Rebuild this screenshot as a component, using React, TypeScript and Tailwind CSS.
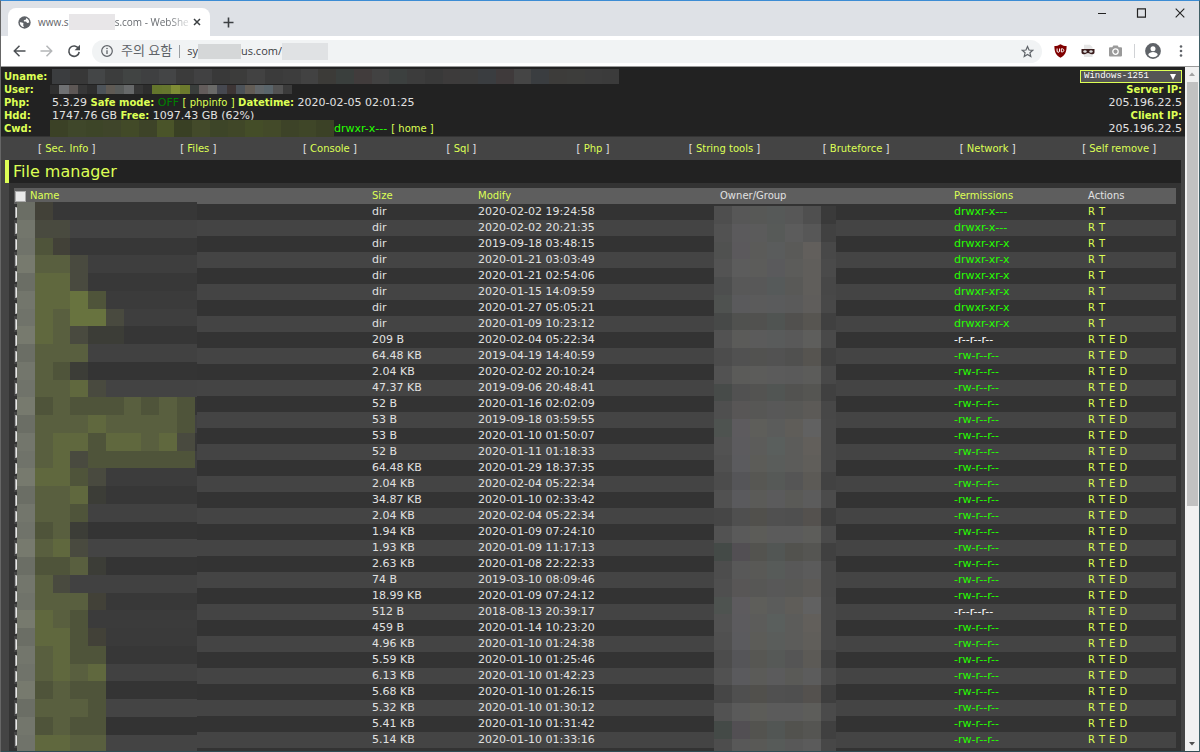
import React from 'react';

const CELL = 17.75;

type MosaicProps = {
  rows: string[][];
  cellWidth: number;
  cellHeight: number;
  width: number;
  height: number;
  className?: string;
};

/** Pixelated block that hides a private value. */
function Mosaic({ rows, cellWidth, cellHeight, width, height, className }: MosaicProps) {
  return (
    <svg
      className={className}
      width={width}
      height={height}
      viewBox={`0 0 ${width} ${height}`}
      shapeRendering="crispEdges"
      aria-hidden="true"
    >
      {rows.map((row, y) =>
        row.map((fill, x) => (
          <rect
            key={`${x}-${y}`}
            x={x * cellWidth}
            y={y * cellHeight}
            width={cellWidth + 0.3}
            height={cellHeight + 0.3}
            fill={fill}
          />
        )),
      )}
    </svg>
  );
}

const shades: Record<string, string> = {
  z: '#3c3d37',
  y: '#424138',
  a: '#494a3f',
  b: '#4f543a',
  c: '#595f3f',
  d: '#60683e',
  e: '#68733f',
};

// Each entry: background of the row, then the tint of each cell from the left.
const nameRows: [string, string][] = [
  ['#373737', 'y'],
  ['#424242', 'aa'],
  ['#373737', 'by'],
  ['#3e3e3e', 'cca'],
  ['#383838', 'dda'],
  ['#3b3b3b', 'ddeb'],
  ['#3e3e3e', 'dceea'],
  ['#363636', 'dcazz'],
  ['#414141', 'ccc'],
  ['#343434', 'cbz'],
  ['#434343', 'ccda'],
  ['#353535', 'bcbbbcbcb'],
  ['#414141', 'cccdccccb'],
  ['#363636', 'cddbddcda'],
  ['#3e3e3e', 'cdabbbbbb'],
  ['#3c3c3c', 'ddba'],
  ['#373737', 'ccdz'],
  ['#414141', 'ccb'],
  ['#343434', 'bcz'],
  ['#444444', 'cda'],
  ['#343434', 'bbcz'],
  ['#414141', 'ca'],
  ['#383838', 'cccy'],
  ['#3b3b3b', 'dcb'],
  ['#3a3a3a', 'ddby'],
  ['#373737', 'cdbb'],
  ['#414141', 'cdcd'],
  ['#343434', 'bcbb'],
  ['#444444', 'cccb'],
  ['#333333', 'bcbb'],
  ['#444444', 'ddcc'],
];

const edgeShades = ['#6b6e65', '#73766c', '#70736a', '#777a6e'];

const nameMosaic = nameRows.map(([base, tint], i) => {
  const cells = [edgeShades[i % 4]];
  for (let x = 0; x < 10; x++) cells.push(x < tint.length ? shades[tint[x]] : base);
  return cells;
});

const ownerPatterns = [
  ['#4e4e4e', '#575757', '#575856', '#565958', '#575757', '#4f4f4f', '#3a3a3a'],
  ['#525252', '#5b5a5c', '#5b5b5b', '#575a58', '#5c5c5c', '#575757', '#414141'],
  ['#505150', '#5b595c', '#5b5b59', '#5a5c5c', '#5a5a58', '#625f5c', '#484848'],
  ['#535353', '#5c5c5c', '#5c5c5a', '#5a5a5c', '#5c5c5a', '#605e5b', '#4a4a4a'],
  ['#4d4e4e', '#585858', '#585858', '#565a5a', '#595957', '#605e5b', '#474747'],
  ['#4f5250', '#5a5a5c', '#5b5b5b', '#5a5b5c', '#5a5a5a', '#5f5d5b', '#484848'],
  ['#474948', '#50514f', '#51514f', '#505452', '#51504e', '#575551', '#404040'],
  ['#525252', '#5b5b59', '#5b5b5b', '#595b5b', '#595959', '#5e5e5c', '#494949'],
  ['#4c4c4c', '#515151', '#525250', '#525252', '#50504f', '#565450', '#404040'],
  ['#525252', '#5b5b59', '#5c5c5a', '#5b5b5b', '#5a5a5a', '#5c5c5a', '#484848'],
  ['#474b49', '#515151', '#535351', '#515553', '#525250', '#555552', '#404040'],
  ['#4f4f4f', '#585656', '#575755', '#585858', '#585856', '#5c5a57', '#474747'],
  ['#4e5350', '#5d5b5e', '#5e5e5a', '#5b5c5b', '#5f5d59', '#616161', '#484848'],
  ['#525252', '#5c5b5e', '#5c5c5a', '#5a5f5d', '#5c5c5a', '#625f5b', '#484848'],
  ['#505050', '#5b5b5e', '#5c5c58', '#5a5d5b', '#5c5c5a', '#605e5a', '#484848'],
  ['#4c4c4c', '#555558', '#575753', '#565957', '#555555', '#5c5a56', '#424242'],
  ['#515151', '#5a5a5d', '#5b5b58', '#5b5b5c', '#5a5a57', '#5c5c5c', '#4b4b4b'],
  ['#464646', '#4f4f4f', '#51504c', '#505050', '#4f4f4f', '#54514e', '#3e3e3e'],
  ['#525252', '#5a5a5a', '#5c5c58', '#5b5b5b', '#5b5b5b', '#5d5d5a', '#4a4a4a'],
  ['#444a47', '#524f53', '#53534f', '#525654', '#52524e', '#555552', '#404040'],
  ['#4d4d4d', '#585858', '#595956', '#575b59', '#585858', '#5b5b5b', '#474747'],
];

const ownerMosaic = Array.from({ length: 31 }, (_, i) => ownerPatterns[i < 21 ? i : i - 10]);

const unameMosaic = [
  [
    '#3b3d3f', '#383838', '#444647', '#3c3d3d', '#414443', '#3f4041', '#444546', '#3b3b3b',
    '#414142', '#393939', '#3c3c3b', '#424242', '#3b3b3b', '#3d3d3d', '#424242', '#3c3b38',
    '#3a3f3d', '#413c3c', '#424242', '#3c403f', '#3c3c3c', '#393939', '#3d3b3b', '#3c3c3c',
    '#3a3d40', '#3f3a3b', '#454545', '#3a3d40', '#3d3c3a', '#3d3d3b', '#3c3c3c', '#3b3b3b',
  ],
];

const userMosaic = [
  [
    '#303030', '#6f7173', '#5d5755', '#373737', '#2e2e2e', '#4d5359', '#5f5a54', '#585b5a',
    '#67696a', '#363636', '#2d2d2d', '#64752c', '#66762e', '#7f8c35', '#6c7a2d', '#3a3e3c',
    '#635c5b', '#6a6a68', '#464850', '#3d3535', '#4c5258', '#625c55', '#616669', '#5a656b',
    '#535353', '#3b3b3b',
  ],
];

const cwdMosaic = [
  [
    '#3b4126', '#3f472a', '#3d4528', '#3f452a', '#424a28', '#3d4328', '#4a5429', '#394024',
    '#434a2a', '#3d4528', '#404728', '#444d28', '#434a29', '#3d4328', '#3f4628', '#3b4126',
  ],
];

type FileRow = { size: string; date: string; perm: string };

const rows: FileRow[] = [
  ['dir', '2020-02-02 19:24:58', 'drwxr-x---'],
  ['dir', '2020-02-02 20:21:35', 'drwxr-x---'],
  ['dir', '2019-09-18 03:48:15', 'drwxr-xr-x'],
  ['dir', '2020-01-21 03:03:49', 'drwxr-xr-x'],
  ['dir', '2020-01-21 02:54:06', 'drwxr-xr-x'],
  ['dir', '2020-01-15 14:09:59', 'drwxr-xr-x'],
  ['dir', '2020-01-27 05:05:21', 'drwxr-xr-x'],
  ['dir', '2020-01-09 10:23:12', 'drwxr-xr-x'],
  ['209 B', '2020-02-04 05:22:34', '-r--r--r--'],
  ['64.48 KB', '2019-04-19 14:40:59', '-rw-r--r--'],
  ['2.04 KB', '2020-02-02 20:10:24', '-rw-r--r--'],
  ['47.37 KB', '2019-09-06 20:48:41', '-rw-r--r--'],
  ['52 B', '2020-01-16 02:02:09', '-rw-r--r--'],
  ['53 B', '2019-09-18 03:59:55', '-rw-r--r--'],
  ['53 B', '2020-01-10 01:50:07', '-rw-r--r--'],
  ['52 B', '2020-01-11 01:18:33', '-rw-r--r--'],
  ['64.48 KB', '2020-01-29 18:37:35', '-rw-r--r--'],
  ['2.04 KB', '2020-02-04 05:22:34', '-rw-r--r--'],
  ['34.87 KB', '2020-01-10 02:33:42', '-rw-r--r--'],
  ['2.04 KB', '2020-02-04 05:22:34', '-rw-r--r--'],
  ['1.94 KB', '2020-01-09 07:24:10', '-rw-r--r--'],
  ['1.93 KB', '2020-01-09 11:17:13', '-rw-r--r--'],
  ['2.63 KB', '2020-01-08 22:22:33', '-rw-r--r--'],
  ['74 B', '2019-03-10 08:09:46', '-rw-r--r--'],
  ['18.99 KB', '2020-01-09 07:24:12', '-rw-r--r--'],
  ['512 B', '2018-08-13 20:39:17', '-r--r--r--'],
  ['459 B', '2020-01-14 10:23:20', '-rw-r--r--'],
  ['4.96 KB', '2020-01-10 01:24:38', '-rw-r--r--'],
  ['5.59 KB', '2020-01-10 01:25:46', '-rw-r--r--'],
  ['6.13 KB', '2020-01-10 01:42:23', '-rw-r--r--'],
  ['5.68 KB', '2020-01-10 01:26:15', '-rw-r--r--'],
  ['5.32 KB', '2020-01-10 01:30:12', '-rw-r--r--'],
  ['5.41 KB', '2020-01-10 01:31:42', '-rw-r--r--'],
  ['5.14 KB', '2020-01-10 01:33:16', '-rw-r--r--'],
].map(([size, date, perm]) => ({ size, date, perm }));

const menu = ['Sec. Info', 'Files', 'Console', 'Sql', 'Php', 'String tools', 'Bruteforce', 'Network', 'Self remove'];

function TabStrip() {
  return (
    <div className="flex h-[35px] shrink-0 items-end bg-[#dee1e6] pl-[7px]">
      <div className="flex h-7 w-[202px] items-center rounded-t-lg bg-white pl-[10px] pr-[9px] text-[10px] text-[#5f6368]">
        <svg width="13" height="13" viewBox="0 0 16 16" className="mr-[7px] shrink-0" aria-hidden="true">
          <circle cx="8" cy="8" r="7.6" fill="#5f6368" />
          <path
            d="M2.2 7.6c1.500.2 3.700.2 4.400 1.300.6 1-.5 1.500-.2 2.500.2.800.9.900.8 2.200-3-.2-5.200-2.900-5-6zM10 2.600c-.2.900.2 1.400-.7 1.900-1 .5-2 .2-2.200 1.300-.1.900 1.200.9 2.200 1 1.400.1 1.200 1.600 2.300 1.800.9.200 1.200-.6 2.200-.5.100-2.500-1.500-4.700-3.800-5.500z"
            fill="#fff"
          />
        </svg>
        <span className="flex min-w-0 flex-1 items-center whitespace-nowrap">
          www.s
          <span className="h-4 w-[46px] shrink-0 bg-[#e8e6e8]" />
          <span className="bg-linear-to-r from-[#5f6368] from-70% to-[#e4e5e6] bg-clip-text text-transparent">
            s.com - WebShe
          </span>
        </span>
        <button type="button" aria-label="Close tab" className="flex size-[9px] shrink-0 items-center justify-center">
          <svg width="8" height="8" viewBox="0 0 8 8" aria-hidden="true">
            <path d="M1 1l6 6M7 1l-6 6" stroke="#3c4043" strokeWidth="1.5" />
          </svg>
        </button>
      </div>
      <button type="button" aria-label="New tab" className="ml-[13px] flex h-7 items-center">
        <svg width="11" height="11" viewBox="0 0 11 11" aria-hidden="true">
          <path d="M5.500.5v10M.5 5.500h10" stroke="#3c4043" strokeWidth="1.600" />
        </svg>
      </button>
      <div className="ml-auto flex h-[35px] items-start gap-[29px] pr-[14px] pt-[7px]">
        <button type="button" aria-label="Minimize">
          <svg width="10" height="10" viewBox="0 0 10 10" aria-hidden="true">
            <path d="M1 5.500h8" stroke="#222" />
          </svg>
        </button>
        <button type="button" aria-label="Maximize">
          <svg width="10" height="10" viewBox="0 0 10 10" aria-hidden="true">
            <path d="M1.500.9h8v8.200h-8z" fill="none" stroke="#222" strokeWidth="1.200" />
          </svg>
        </button>
        <button type="button" aria-label="Close">
          <svg width="10" height="10" viewBox="0 0 10 10" aria-hidden="true">
            <path d="M.7.7l8.600 8.600M9.300.7L.7 9.300" stroke="#222" strokeWidth="1.100" />
          </svg>
        </button>
      </div>
    </div>
  );
}

function Toolbar() {
  return (
    <div className="flex h-[31px] shrink-0 items-center border-b border-[#9a9a9a] bg-white pl-3 pr-4">
      <button type="button" aria-label="Back" className="mr-[14px]">
        <svg width="13" height="12" viewBox="0 0 13 12" aria-hidden="true">
          <path d="M12.500 6H1.500M6.500.8L1.300 6l5.200 5.200" fill="none" stroke="#4c5054" strokeWidth="1.500" />
        </svg>
      </button>
      <button type="button" aria-label="Forward" className="mr-[14px]">
        <svg width="13" height="12" viewBox="0 0 13 12" aria-hidden="true">
          <path d="M.5 6h11M6.500.8L11.700 6l-5.200 5.200" fill="none" stroke="#b4b6b8" strokeWidth="1.500" />
        </svg>
      </button>
      <button type="button" aria-label="Reload">
        <svg width="14" height="14" viewBox="0 0 14 14" aria-hidden="true">
          <path d="M11.600 4.600A5.200 5.200 0 1 0 12.200 8" fill="none" stroke="#4c5054" strokeWidth="1.600" />
          <path d="M13 .8v5.400H7.600z" fill="#4c5054" />
        </svg>
      </button>
      <div className="ml-[11px] flex h-[23px] flex-1 items-center rounded-full bg-[#f1f3f4] pl-[9px] pr-2 text-[#5f6368]">
        <svg width="12" height="12" viewBox="0 0 12 12" className="mr-2" aria-hidden="true">
          <circle cx="6" cy="6" r="5.300" fill="none" stroke="#5f6368" strokeWidth="1.200" />
          <path d="M6 5.300V9" stroke="#5f6368" strokeWidth="1.300" />
          <circle cx="6" cy="3.500" r=".8" fill="#5f6368" />
        </svg>
        <span className="text-[13px]">주의 요함</span>
        <span className="mx-[7px] h-[13px] w-px bg-[#9a9ea2]" />
        <span className="flex items-center text-[11px] text-[#3c4043]">
          sy
          <span className="h-[15px] w-[43px] bg-[#d5d7d8]" />
          us.com/
          <span className="h-[17px] w-[46px] bg-[#e0e2e4]" />
        </span>
        <button type="button" aria-label="Bookmark" className="ml-auto">
          <svg width="13" height="13" viewBox="0 0 24 24" aria-hidden="true">
            <path
              d="M12 2.800l2.800 6.400 7 .6-5.300 4.600 1.600 6.900L12 17.600l-6.100 3.700 1.600-6.900L2.200 9.800l7-.6z"
              fill="none"
              stroke="#5f6368"
              strokeWidth="2.200"
            />
          </svg>
        </button>
      </div>
      <div className="ml-3 flex items-center gap-[14px]">
        <svg width="13" height="14" viewBox="0 0 13 14" aria-hidden="true">
          <path d="M6.500.3C8.500 1.700 10.500 2 12.600 2c0 6-1.500 9.300-6.100 11.800C1.900 11.300.4 8 .4 2c2.100 0 4.100-.3 6.100-1.700z" fill="#800000" />
          <path d="M3.100 4.500v2.600c0 1.600 2.400 1.600 2.400 0V4.500M7.300 4.800v3.100h.8c2.300 0 2.300-3.100 0-3.100z" fill="none" stroke="#fff" strokeWidth="1" />
        </svg>
        <svg width="14" height="14" viewBox="0 0 14 14" aria-hidden="true">
          <path d="M3 .8h6L11.500 3v10H3z" fill="#e6e6e6" />
          <path d="M.5 5h13v3.200c0 1.600-1 2-2.700 2C8.700 10.200 8.300 9 7 9s-1.700 1.200-3.800 1.200C1.500 10.200.5 9.800.5 8.200z" fill="#3a1c1c" />
          <ellipse cx="4" cy="7.500" rx="1.700" ry="1.200" fill="#ddd" />
          <ellipse cx="10" cy="7.500" rx="1.700" ry="1.200" fill="#ddd" />
        </svg>
        <svg width="13" height="12" viewBox="0 0 13 12" aria-hidden="true">
          <path d="M4.300.6h4.400l1 1.600h2.400c.5 0 .9.400.9.900v7.400c0 .5-.4.900-.9.900H.9c-.5 0-.9-.4-.9-.9V3.100c0-.5.4-.9.9-.9h2.400z" fill="#9a9a9a" />
          <circle cx="6.500" cy="6.600" r="2.700" fill="none" stroke="#fff" strokeWidth="1.300" />
        </svg>
      </div>
      <span className="ml-3 h-[14px] w-px bg-[#d0d2d5]" />
      <button type="button" aria-label="Profile" className="ml-[10px]">
        <svg width="16" height="16" viewBox="0 0 16 16" aria-hidden="true">
          <circle cx="8" cy="8" r="7.900" fill="#5f6368" />
          <circle cx="8" cy="5.700" r="2.500" fill="#fff" />
          <path d="M3.200 12c.3-2.200 3-2.900 4.800-2.900s4.500.7 4.800 2.900A6.200 6.200 0 0 1 8 14.200 6.200 6.200 0 0 1 3.200 12z" fill="#fff" />
        </svg>
      </button>
      <button type="button" aria-label="Menu" className="ml-[18px]">
        <svg width="4" height="12" viewBox="0 0 4 12" aria-hidden="true">
          <circle cx="2" cy="1.500" r="1.300" fill="#5f6368" />
          <circle cx="2" cy="6" r="1.300" fill="#5f6368" />
          <circle cx="2" cy="10.500" r="1.300" fill="#5f6368" />
        </svg>
      </button>
    </div>
  );
}

function Label({ children }: { children: React.ReactNode }) {
  return <b className="text-[10px] text-[#ddff55]">{children}</b>;
}

function ServerInfo() {
  return (
    <header className="flex justify-between bg-[#222] px-[3px] pt-[3px] pb-px text-[11px] leading-[13px] text-[#e1e1e1]">
      <dl className="grid grid-cols-[46px_auto] whitespace-nowrap">
        <dt><Label>Uname:</Label></dt>
        <dd className="flex h-[13px] items-center pl-[2px]">
          <Mosaic rows={unameMosaic} cellWidth={CELL} cellHeight={15} width={567} height={15} className="shrink-0" />
        </dd>
        <dt><Label>User:</Label></dt>
        <dd className="flex h-[13px] items-center">
          <Mosaic rows={userMosaic} cellWidth={9.3} cellHeight={9} width={242} height={9} />
        </dd>
        <dt><Label>Php:</Label></dt>
        <dd className="pl-[2px]">
          5.3.29 <Label>Safe mode:</Label> <span className="text-[#008000]">OFF</span>{' '}
          <span className="text-[10px] text-[#ddff55]">[ <a href="#phpinfo">phpinfo</a> ]</span>{' '}
          <Label>Datetime:</Label> 2020-02-05 02:01:25
        </dd>
        <dt><Label>Hdd:</Label></dt>
        <dd className="pl-[2px]">
          1747.76 GB <Label>Free:</Label> 1097.43 GB (62%)
        </dd>
        <dt><Label>Cwd:</Label></dt>
        <dd className="flex h-[13px] items-center">
          <Mosaic rows={cwdMosaic} cellWidth={CELL} cellHeight={17} width={284} height={17} className="shrink-0" />
          <span className="text-[#25ff00]">drwxr-x---</span>
          <span className="ml-1 text-[10px] text-[#ddff55]">[ <a href="#home">home</a> ]</span>
        </dd>
      </dl>
      <div className="flex flex-col items-end">
        <select
          aria-label="Charset"
          defaultValue="Windows-1251"
          className="h-[13px] w-[102px] appearance-none border border-[#ddff55] bg-[#555] bg-[url('data:image/svg+xml,%3Csvg%20xmlns=%22http://www.w3.org/2000/svg%22%20viewBox=%220%200%206%206%22%3E%3Cpath%20d=%22M0%200h6L3%206z%22%20fill=%22white%22/%3E%3C/svg%3E')] bg-[length:6px_6px] bg-[position:right_5px_center] bg-no-repeat pl-[3px] font-['Liberation_Mono',monospace] text-[9px] leading-[11px] text-white"
        >
          <option>Windows-1251</option>
        </select>
        <Label>Server IP:</Label>
        <span>205.196.22.5</span>
        <Label>Client IP:</Label>
        <span>205.196.22.5</span>
      </div>
    </header>
  );
}

function FileTable() {
  return (
    <div className="relative">
      <table className="w-full table-fixed border-collapse text-left text-[10px] leading-4 text-[#e1e1e1]">
        <colgroup>
          <col />
          <col className="w-[106px]" />
          <col className="w-[242px]" />
          <col className="w-[234px]" />
          <col className="w-[134px]" />
          <col className="w-[88px]" />
        </colgroup>
        <thead>
          <tr className="h-4 bg-[#5e5e5e] text-[#ddff55]">
            <th className="p-0 font-normal">
              <span className="flex h-4 items-center gap-1 pl-px">
                <input type="checkbox" aria-label="Select all" className="size-[11px] appearance-none border border-[#aaa] bg-[#e8e8e8]" />
                <a href="#name">Name</a>
              </span>
            </th>
            <th className="p-0 font-normal"><a href="#size">Size</a></th>
            <th className="p-0 font-normal"><a href="#modify">Modify</a></th>
            <th className="p-0 font-normal text-[#e1e1e1]">Owner/Group</th>
            <th className="p-0 font-normal"><a href="#permissions">Permissions</a></th>
            <th className="p-0 font-normal text-[#e1e1e1]">Actions</th>
          </tr>
        </thead>
        <tbody>
          {rows.map((row, i) => (
            <tr key={i} className="h-4 odd:bg-[#333] even:bg-[#444]">
              <td className="p-0">
                <span className="flex h-4 items-center pl-px">
                  <input type="checkbox" aria-label={`Select row ${i + 1}`} className="size-[11px] appearance-none border border-[#aaa] bg-[#e8e8e8]" />
                </span>
              </td>
              <td className="p-0 text-[11px]">{row.size}</td>
              <td className="p-0 text-[11px]">{row.date}</td>
              <td className="p-0" />
              <td className="p-0 text-[11px]">
                <a href="#chmod" className={row.perm === '-r--r--r--' ? 'text-white' : 'text-[#25ff00]'}>{row.perm}</a>
              </td>
              <td className="p-0">
                <span className="flex gap-1 text-[#ddff55]">
                  <a href="#rename">R</a>
                  <a href="#touch">T</a>
                  {row.size !== 'dir' && <a href="#edit">E</a>}
                  {row.size !== 'dir' && <a href="#download">D</a>}
                </span>
              </td>
            </tr>
          ))}
        </tbody>
      </table>
      <Mosaic rows={nameMosaic} cellWidth={CELL} cellHeight={CELL} width={180} height={549} className="absolute left-[3px] top-[14px]" />
      <Mosaic rows={ownerMosaic} cellWidth={CELL} cellHeight={CELL} width={122} height={545} className="absolute right-[340px] top-[18px]" />
    </div>
  );
}

export default function App() {
  return (
    <div className="flex h-screen flex-col overflow-hidden border-t border-r border-l border-t-[#3c8cd4] border-r-[#3f5f66] border-l-[#666] bg-[#444] font-['Open_Sans','Noto_Sans_CJK_KR',sans-serif]">
      <TabStrip />
      <Toolbar />
      <div className="flex min-h-0 flex-1 border-b border-[#2f4d55]">
        <main className="min-w-0 flex-1 overflow-hidden bg-[#444] font-['DejaVu_Sans',sans-serif]">
          <ServerInfo />
          <nav className="grid grid-cols-9 border-t border-[#333] pt-px text-center text-[10px] leading-[22px] text-[#e1e1e1]">
            {menu.map((item) => (
              <span key={item} className="whitespace-nowrap">
                [ <a href="#menu" className="text-[#ddff55]">{item}</a> ]
              </span>
            ))}
          </nav>
          <h1 className="ml-1 mr-1 border-l-4 border-[#ddff55] bg-[#222] pl-1 text-[16px] leading-[23px] text-[#ddff55]">
            File manager
          </h1>
          <section className="ml-2 mr-1 bg-[#333] px-[5px] pb-[5px] pt-[5px]">
            <FileTable />
          </section>
        </main>
        <aside className="flex w-[14px] shrink-0 flex-col items-center bg-[#f1f1f1]" aria-label="Scroll position">
          <svg width="14" height="15" viewBox="0 0 14 15" className="shrink-0" aria-hidden="true">
            <path d="M4 9h6L7 5.500z" fill="#a3a3a3" />
          </svg>
          <div className="h-[62%] w-[11px] bg-[#c1c1c1]" />
          <svg width="14" height="15" viewBox="0 0 14 15" className="mt-auto shrink-0" aria-hidden="true">
            <path d="M4 6h6L7 9.500z" fill="#505050" />
          </svg>
        </aside>
      </div>
    </div>
  );
}
